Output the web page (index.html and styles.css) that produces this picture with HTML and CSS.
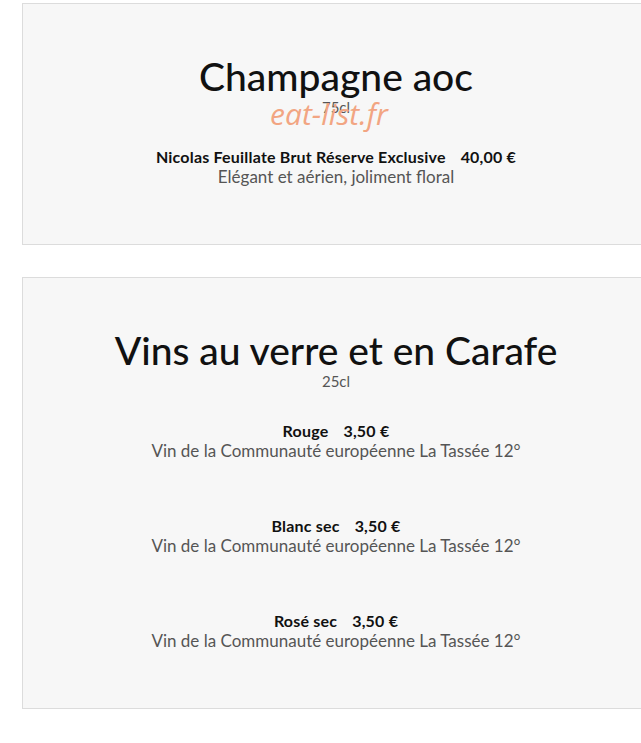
FILE: index.html
```html
<!DOCTYPE html>
<html lang="fr">
<head>
    <meta charset="UTF-8">
    <meta name="viewport" content="width=device-width, initial-scale=1.0">
    <title>Carte des vins</title>
    <link rel="stylesheet" href="styles.css">
</head>
<body>
    <div class="menu">
        <section class="card">
            <h2>Champagne aoc</h2>
            <div class="size">75cl</div>
            <div class="watermark">eat-list.fr</div>

            <div class="item">
                <div class="item-head">
                    <span class="name">Nicolas Feuillate Brut Réserve Exclusive</span>
                    <span class="price">40,00 €</span>
                </div>
                <p class="desc">Elégant et aérien, joliment floral</p>
            </div>
        </section>

        <section class="card">
            <h2>Vins au verre et en Carafe</h2>
            <div class="size">25cl</div>

            <div class="item">
                <div class="item-head">
                    <span class="name">Rouge</span>
                    <span class="price">3,50 €</span>
                </div>
                <p class="desc">Vin de la Communauté européenne La Tassée 12°</p>
            </div>

            <div class="item">
                <div class="item-head">
                    <span class="name">Blanc sec</span>
                    <span class="price">3,50 €</span>
                </div>
                <p class="desc">Vin de la Communauté européenne La Tassée 12°</p>
            </div>

            <div class="item">
                <div class="item-head">
                    <span class="name">Rosé sec</span>
                    <span class="price">3,50 €</span>
                </div>
                <p class="desc">Vin de la Communauté européenne La Tassée 12°</p>
            </div>
        </section>
    </div>
</body>
</html>
```

FILE: styles.css
```css
* {
    margin: 0;
    padding: 0;
    box-sizing: border-box;
    font-family: Lato, "Noto Sans", sans-serif;
}

html, body {
    overflow-x: hidden;
}

body {
    background-color: white;
    color: #111;
}

.menu {
    padding: 3px 0 0 22px;
}

.card {
    position: relative;
    width: 628px;
    background-color: #f7f7f7;
    border: 1px solid #dcdcdc;
    padding: 50px 0 57px;
    margin-bottom: 32px;
    text-align: center;
}

.card h2 {
    font-size: 39px;
    line-height: 44px;
    font-weight: 500;
    color: #111;
}

.size {
    font-size: 15px;
    line-height: 18px;
    color: #555;
}

.watermark {
    position: absolute;
    top: 89px;
    left: 0;
    right: 0;
    padding-right: 14px;
    font-family: "Open Sans", sans-serif;
    font-style: italic;
    font-size: 30px;
    color: #f2a582;
    pointer-events: none;
}

.item {
    margin-top: 31px;
}

.item + .item {
    margin-top: 55px;
}

.item-head {
    display: flex;
    justify-content: center;
    align-items: baseline;
    gap: 15px;
}

.name,
.price {
    font-size: 16px;
    line-height: 20px;
    font-weight: 700;
    color: #111;
    letter-spacing: 0.2px;
}

.desc {
    font-size: 17px;
    line-height: 20px;
    font-weight: 400;
    color: #555;
}
```
